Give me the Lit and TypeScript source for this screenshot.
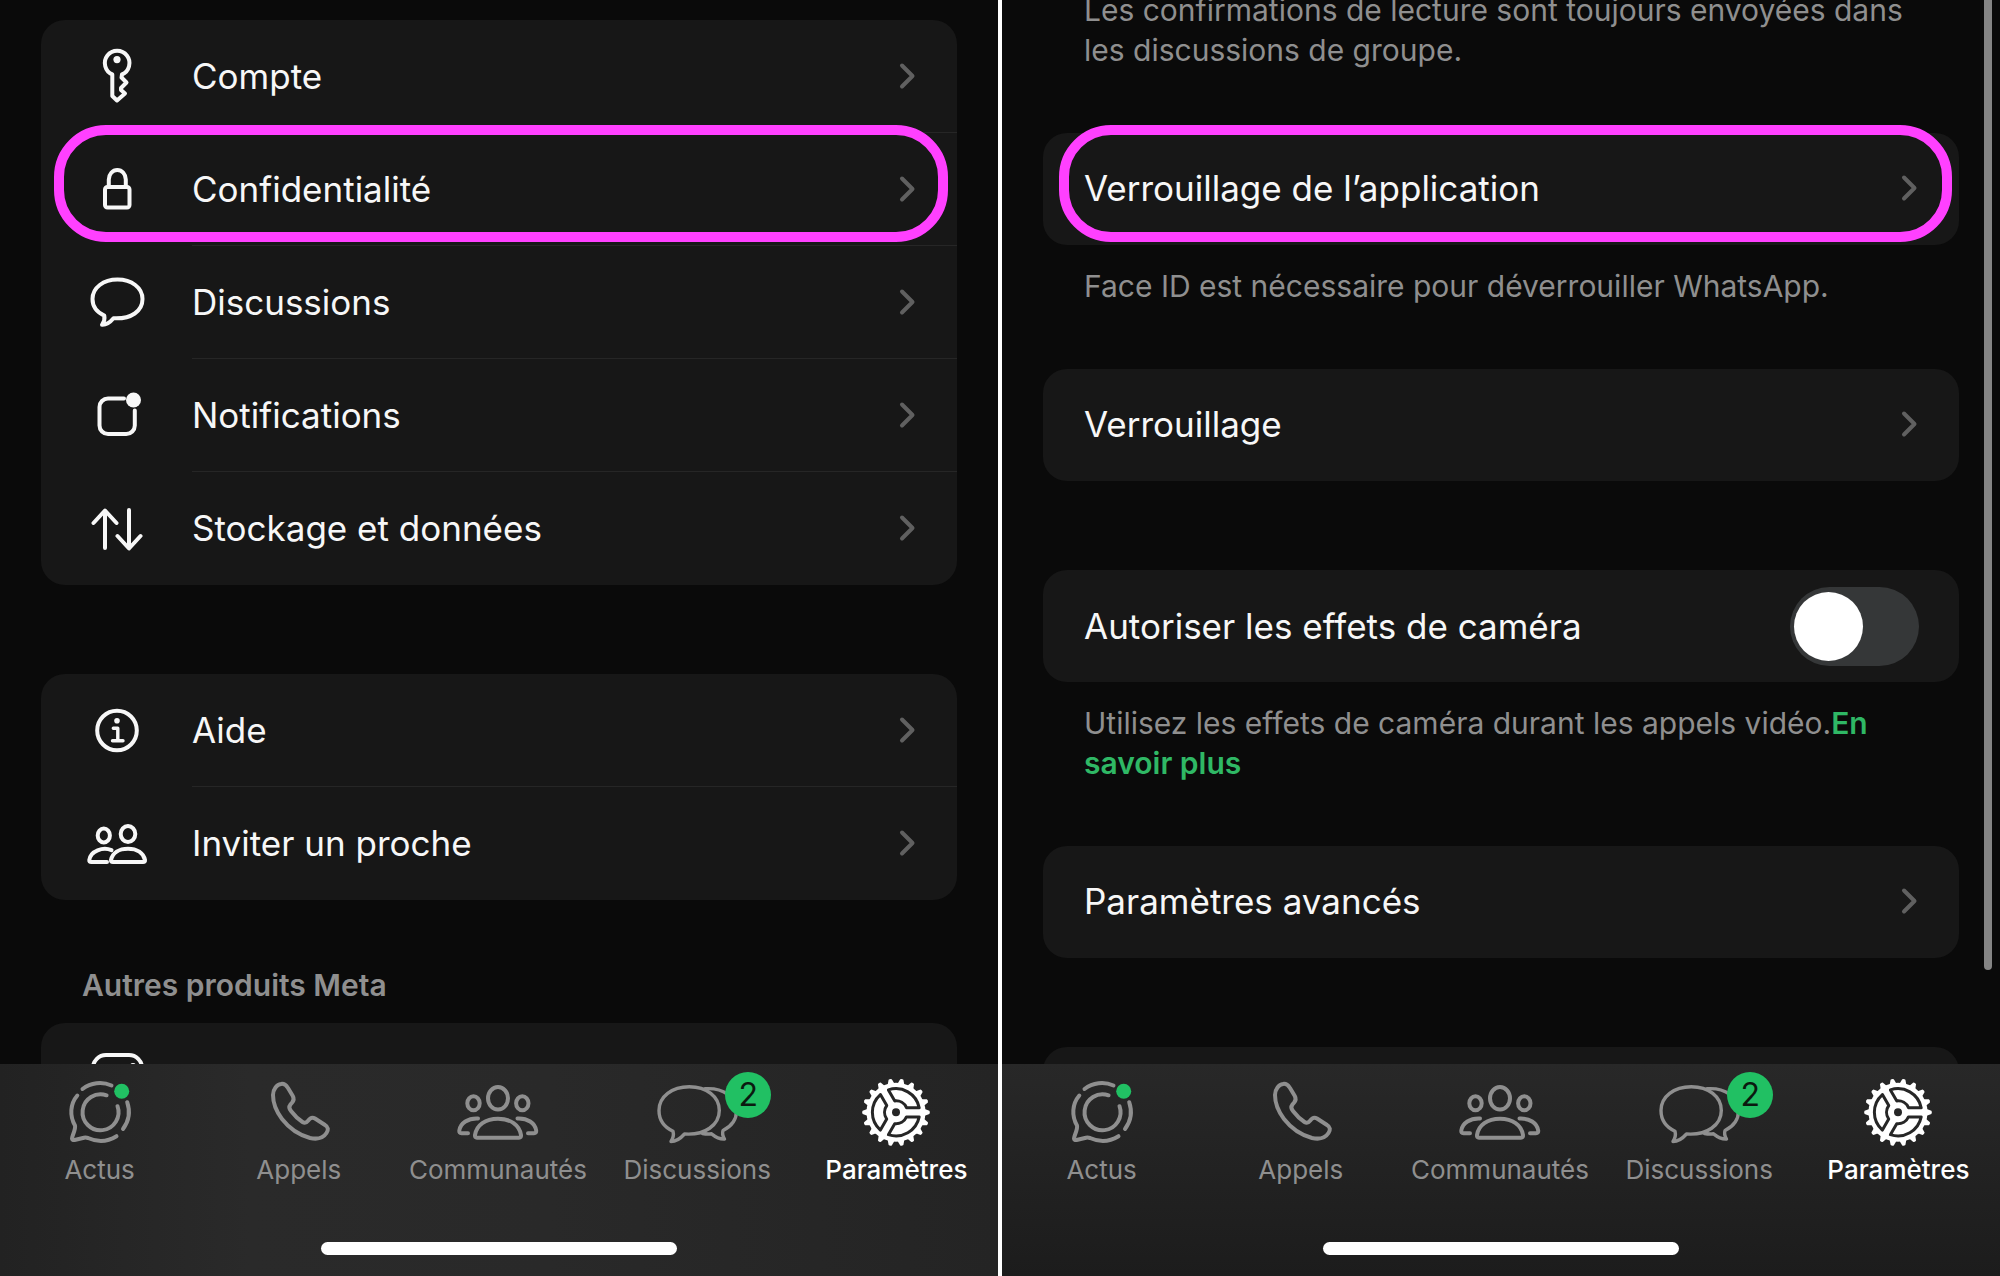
import { LitElement, html, svg, css, nothing, TemplateResult } from "lit";
import { customElement, property, state } from "lit/decorators.js";

type Drawing = TemplateResult;

const rowIcons: Record<string, Drawing> = {
  key: svg`
    <path d="M25.3 28.4 A12.3 12.3 0 1 1 35 28.4 L34.5 31.5 L39.5 36.5 L34 42 V44 L38 47.5 L30 54.5 L25.3 50 Z"/>
    <circle class="solid" cx="30" cy="13.6" r="3.6"/>`,
  lock: svg`
    <rect x="18" y="28" width="24.5" height="20.5" rx="2.5"/>
    <path d="M21.8 28 V20.5 a8.5 9.5 0 0 1 17 0 V28"/>`,
  chat: svg`
    <path d="M26.5 46.3 C23 50.5 18.5 53 15 52.8 C17 50 18 47 17.3 43.6 C9.5 40 5.5 34 5.5 27 C5.5 15.5 16.5 7.6 30.5 7.6 C44.5 7.6 55.5 15.5 55.5 27 C55.5 39 44.5 47.2 26.5 46.3 Z"/>`,
  notification: svg`
    <path d="M37 13.5 H21 a8.5 8.5 0 0 0 -8.5 8.5 V40.5 a8.5 8.5 0 0 0 8.5 8.5 H39.3 a8.5 8.5 0 0 0 8.5 -8.5 V25.5"/>
    <circle class="solid" cx="46.5" cy="15" r="7.5"/>`,
  transfer: svg`
    <path d="M18 50 V13 M6.5 25 L18 12.5 L29.5 25 M42 12 V50 M30.5 38 L42 50.5 L53.5 38"/>`,
  info: svg`
    <circle cx="30" cy="30.5" r="19.8"/>
    <circle class="solid" cx="30" cy="20.7" r="2.8"/>
    <path class="fine" d="M26.3 28.3 H30.8 V40.8 M25.5 40.8 H36"/>`,
  people: svg`
    <ellipse cx="16.8" cy="22.5" rx="6.1" ry="6.9"/>
    <ellipse cx="41" cy="21" rx="7.3" ry="8"/>
    <path d="M24.5 37.2 C16 33.5 3.5 38 2.3 47 Q2 49 4.3 49 H20"/>
    <path d="M24 47 C25.5 40 32 35.7 41 35.7 C50 35.7 56.5 40 58 47 Q58.3 49 56 49 H26 Q23.7 49 24 47 Z"/>`,
  camera: svg`
    <rect x="6" y="6" width="49" height="49" rx="13"/>
    <circle cx="30.5" cy="30.5" r="11"/>
    <circle class="solid" cx="46" cy="17" r="3"/>`,
};

const gearTeeth = Array.from({ length: 18 }, (_, i) => i * 20);
const gearSectors = [0, 120, 240];

const tabIcons: Record<string, Drawing> = {
  updates: svg`
    <path d="M32.5 20 A29 29 0 0 1 61.5 16.5"/>
    <path d="M27.3 26.5 C20 35 19.5 47 25 56.5 C26 60 22 67 22 69.5 Q22 71.3 24.5 71 L34 68.7 Q36 68.3 38 69 C48 73.5 58 72.5 66.5 67.2"/>
    <path d="M77.2 33.2 A29 29 0 0 1 73 60"/>
    <path d="M56.6 26.3 A18 18 0 1 0 67.5 37.2"/>
    <circle class="dot" cx="71.7" cy="22.3" r="7.5"/>`,
  calls: svg`
    <path d="M32 15 C35 14.3 37 16 39 19 L43.8 27 C45.5 30 45 31.5 43 33.8 L41.3 35.7 C39.7 37.7 40 39.5 42 42 C45 46 49 50 53.5 53 C55.5 54.3 57.2 54 59 51.7 C61 49 63.5 48 66 49.5 L76 56 C79.5 58 79.5 61 77.5 64 C74 69.5 68 70.5 61 69 C50 66 40 59 33 50 C27 42 24 34 24 26 C24 20 28 15.5 32 15 Z"/>`,
  communities: svg`
    <ellipse cx="25.5" cy="34.3" rx="6.2" ry="7"/>
    <ellipse cx="50" cy="29.3" rx="10" ry="11.3"/>
    <ellipse cx="74.3" cy="34.3" rx="6.2" ry="7"/>
    <path d="M30 49.5 C20 49 12.5 54 11.3 61.5 Q11 64.3 13.5 64.3 H20"/>
    <path d="M69.5 49.5 C79.5 49 87 54 88.2 61.5 Q88.5 64.3 86 64.3 H80"/>
    <path d="M27 66 C28.5 56 37.5 49.7 50 49.7 C62.5 49.7 71.5 56 73 66 Q73.3 68.7 71 68.7 H29 Q26.7 68.7 27 66 Z"/>`,
  chats: svg`
    <path class="fine" d="M37.5 65 C33.5 69.5 28.5 72.5 24 72.5 C26 69.5 27 66 26 62.3 C17 58 12 50.5 12 41.5 C12 27.5 25 17.8 42.3 17.8 C59.5 17.8 72.3 27.5 72.3 41.5 C72.3 56 58 66.5 37.5 65 Z"/>
    <path class="fine" d="M58 19.8 C76 18.5 89.5 28 89.5 42 C89.5 50 85 57 76 61.5 C75 64.5 76 67.5 77.5 70 C73 70.3 68.5 68 64.5 64.8 C61.5 65.2 58.5 65 55.5 64.5"/>`,
  settings: svg`
    <g class="gear" transform="translate(50 43.3)">
      ${gearTeeth.map((a) => svg`<path d="M28 -3.6 L33.4 -1.6 Q34.4 0 33.4 1.6 L28 3.6 Z" transform="rotate(${a})"/>`)}
      <circle r="29.5"/>
      ${gearSectors.map((a) => svg`<path class="cut" d="M23.2 -4.6 A23.7 23.7 0 0 0 -7.6 -22.4 L-1.2 -11.4 A11.5 11.5 0 0 1 10.5 -4.6 Z" transform="rotate(${a})"/>`)}
      <circle class="hole" r="4"/>
    </g>`,
};

const iconBase = css`
  svg {
    display: block;
    overflow: visible;
    fill: none;
    stroke: currentColor;
    stroke-width: 4;
    stroke-linecap: round;
    stroke-linejoin: round;
  }
  .solid {
    fill: currentColor;
    stroke: none;
  }
  .fine {
    stroke-width: 3.4;
  }
`;

const resetButton = css`
  button {
    margin: 0;
    border: 0;
    background: none;
    color: inherit;
    font: inherit;
    text-align: left;
    cursor: pointer;
  }
`;

@customElement("settings-row")
export class SettingsRow extends LitElement {
  @property() label = "";
  @property() icon = "";
  @property({ type: Boolean, reflect: true }) divided = false;
  @property({ type: Boolean, reflect: true }) highlighted = false;

  static styles = [
    iconBase,
    resetButton,
    css`
      :host {
        display: block;
        position: relative;
      }
      .row {
        display: flex;
        align-items: center;
        box-sizing: border-box;
        width: 100%;
        height: 112px;
        padding: 0 42px 2px 0;
        font-size: 35px;
        line-height: 44px;
      }
      :host([icon]) .row {
        height: 113px;
      }
      .icon {
        display: flex;
        justify-content: center;
        flex: none;
        width: 151px;
      }
      .indent {
        flex: none;
        width: 41px;
      }
      .label {
        flex: 1;
      }
      .chevron {
        color: #606060;
      }
      .divider {
        height: 1px;
        margin: -1px 0 0 151px;
        background: #262626;
      }
      .ring {
        position: absolute;
        inset: -8px 7px 3px 16px;
        border: 10px solid #ff40ff;
        border-radius: 52px;
        pointer-events: none;
        z-index: 1;
      }
      :host([icon]) .ring {
        inset: -8px 9px 4px 13px;
      }
    `,
  ];

  render() {
    return html`
      <button class="row" type="button">
        ${this.icon
          ? html`<span class="icon"><svg width="60" height="60" viewBox="0 0 60 60" aria-hidden="true">${rowIcons[this.icon]}</svg></span>`
          : html`<span class="indent"></span>`}
        <span class="label">${this.label}</span>
        <svg class="chevron" width="16" height="26" viewBox="0 0 16 26" aria-hidden="true">
          <path d="M3 2.5 L13.5 13 L3 23.5" />
        </svg>
      </button>
      ${this.divided ? html`<div class="divider"></div>` : nothing}
      ${this.highlighted ? html`<div class="ring"></div>` : nothing}
    `;
  }
}

@customElement("tab-bar")
export class TabBar extends LitElement {
  @state() private current = "settings";

  private tabs = [
    { id: "updates", label: "Actus" },
    { id: "calls", label: "Appels" },
    { id: "communities", label: "Communautés" },
    { id: "chats", label: "Discussions", badge: 2 },
    { id: "settings", label: "Paramètres" },
  ];

  static styles = [
    iconBase,
    resetButton,
    css`
      :host {
        display: flex;
        flex-direction: column;
        justify-content: space-between;
        box-sizing: border-box;
        height: 212px;
        padding: 5px 0 21px;
        background: var(--bar-fill, #262626);
      }
      .tabs {
        display: grid;
        grid-template-columns: repeat(5, 1fr);
        padding-right: 2px;
      }
      .tab {
        display: flex;
        flex-direction: column;
        align-items: center;
        min-width: 0;
        padding: 0;
        color: #8f8f8f;
        font-size: 26px;
        line-height: 30px;
        white-space: nowrap;
      }
      .active {
        color: #ffffff;
        font-weight: 500;
      }
      .glyph {
        position: relative;
        height: 86px;
      }
      .badge {
        position: absolute;
        top: 3px;
        left: 78px;
        width: 46px;
        border-radius: 23px;
        background: #21c063;
        color: #0b1a10;
        font-size: 32px;
        font-weight: 400;
        line-height: 46px;
        text-align: center;
      }
      .dot {
        fill: #21c063;
        stroke: none;
      }
      .gear {
        fill: currentColor;
        stroke: none;
      }
      .cut {
        stroke: #262626;
        stroke-width: 3;
      }
      .hole {
        fill: #262626;
      }
      .home {
        align-self: center;
        width: 356px;
        height: 13px;
        border-radius: 7px;
        background: #ffffff;
      }
    `,
  ];

  render() {
    return html`
      <nav class="tabs">
        ${this.tabs.map(
          (t) => html`
            <button class="tab ${t.id === this.current ? "active" : ""}" type="button" @click=${() => (this.current = t.id)}>
              <span class="glyph">
                <svg width="100" height="80" viewBox="0 0 100 80" aria-hidden="true">${tabIcons[t.id]}</svg>
                ${t.badge ? html`<span class="badge">${t.badge}</span>` : nothing}
              </span>
              <span>${t.label}</span>
            </button>
          `,
        )}
      </nav>
      <div class="home"></div>
    `;
  }
}

@customElement("app-root")
export class AppRoot extends LitElement {
  static styles = [
    iconBase,
    css`
      :host {
        display: grid;
        grid-template-columns: 1fr 4px 1fr;
        height: 100vh;
        overflow: hidden;
        background: #ffffff;
        color: #f7f7f7;
        font-family: Inter, "Liberation Sans", sans-serif;
      }
      .screen {
        position: relative;
        display: flex;
        flex-direction: column;
        grid-row: 1;
        min-width: 0;
        min-height: 0;
        background: #0a0a0a;
      }
      .main {
        grid-column: 1;
        --bar-fill: linear-gradient(90deg, #222222, #2a2a2a 25%, #292929 55%, #242424);
      }
      .privacy {
        grid-column: 3;
        --bar-fill: linear-gradient(#282828, #1c1c1c);
      }
      .scroll {
        flex: 1;
        min-height: 0;
        overflow: hidden;
        padding: 0 41px;
      }
      .main .scroll {
        padding-top: 20px;
      }
      .card {
        margin-bottom: 89px;
        border-radius: 24px;
        background: #171717;
      }
      .noted {
        margin-bottom: 0;
      }
      .heading {
        margin: -25px 41px 17px;
        color: #8f8f8f;
        font-size: 30px;
        font-weight: 600;
        line-height: 42px;
      }
      .note {
        margin: 0;
        padding: 21px 40px 63px 41px;
        color: #8f8f8f;
        font-size: 30px;
        line-height: 40px;
      }
      .cropped {
        margin-top: -31px;
      }
      .link {
        color: #2fb865;
        font-weight: 600;
        text-decoration: none;
      }
      .partial {
        display: flex;
        align-items: center;
        height: 112px;
      }
      .icon {
        display: flex;
        justify-content: center;
        width: 151px;
      }
      .switch-row {
        display: flex;
        align-items: center;
        justify-content: space-between;
        height: 112px;
        padding: 0 40px 0 41px;
        font-size: 35px;
        line-height: 44px;
      }
      .switch {
        appearance: none;
        display: flex;
        align-items: center;
        width: 129px;
        height: 79px;
        margin: 0;
        padding: 0 4px;
        box-sizing: border-box;
        border-radius: 40px;
        background: #353738;
        cursor: pointer;
      }
      .switch::before {
        content: "";
        width: 69px;
        height: 69px;
        border-radius: 50%;
        background: #ffffff;
      }
      .switch:checked {
        justify-content: flex-end;
        background: #21c063;
      }
      .scrollbar {
        position: absolute;
        top: 0;
        right: 8px;
        width: 8px;
        height: 76%;
        border-radius: 0 0 4px 4px;
        background: #858585;
      }
    `,
  ];

  render() {
    return html`
      <section class="screen main">
        <div class="scroll">
          <div class="card">
            <settings-row icon="key" label="Compte" divided></settings-row>
            <settings-row icon="lock" label="Confidentialité" divided highlighted></settings-row>
            <settings-row icon="chat" label="Discussions" divided></settings-row>
            <settings-row icon="notification" label="Notifications" divided></settings-row>
            <settings-row icon="transfer" label="Stockage et données"></settings-row>
          </div>
          <div class="card">
            <settings-row icon="info" label="Aide" divided></settings-row>
            <settings-row icon="people" label="Inviter un proche"></settings-row>
          </div>
          <h2 class="heading">Autres produits Meta</h2>
          <div class="card partial">
            <span class="icon"><svg width="60" height="60" viewBox="0 0 60 60" aria-hidden="true">${rowIcons.camera}</svg></span>
          </div>
        </div>
        <tab-bar></tab-bar>
      </section>
      <section class="screen privacy">
        <div class="scroll">
          <p class="note cropped">Les confirmations de lecture sont toujours envoyées dans les discussions de groupe.</p>
          <div class="card noted">
            <settings-row label="Verrouillage de l’application" highlighted></settings-row>
          </div>
          <p class="note">Face ID est nécessaire pour déverrouiller WhatsApp.</p>
          <div class="card">
            <settings-row label="Verrouillage"></settings-row>
          </div>
          <div class="card noted switch-row">
            <label for="camera-effects">Autoriser les effets de caméra</label>
            <input id="camera-effects" class="switch" type="checkbox" role="switch" />
          </div>
          <p class="note">Utilisez les effets de caméra durant les appels vidéo.<a class="link" href="#">En savoir plus</a></p>
          <div class="card">
            <settings-row label="Paramètres avancés"></settings-row>
          </div>
          <div class="card partial"></div>
        </div>
        <div class="scrollbar"></div>
        <tab-bar></tab-bar>
      </section>
    `;
  }
}
